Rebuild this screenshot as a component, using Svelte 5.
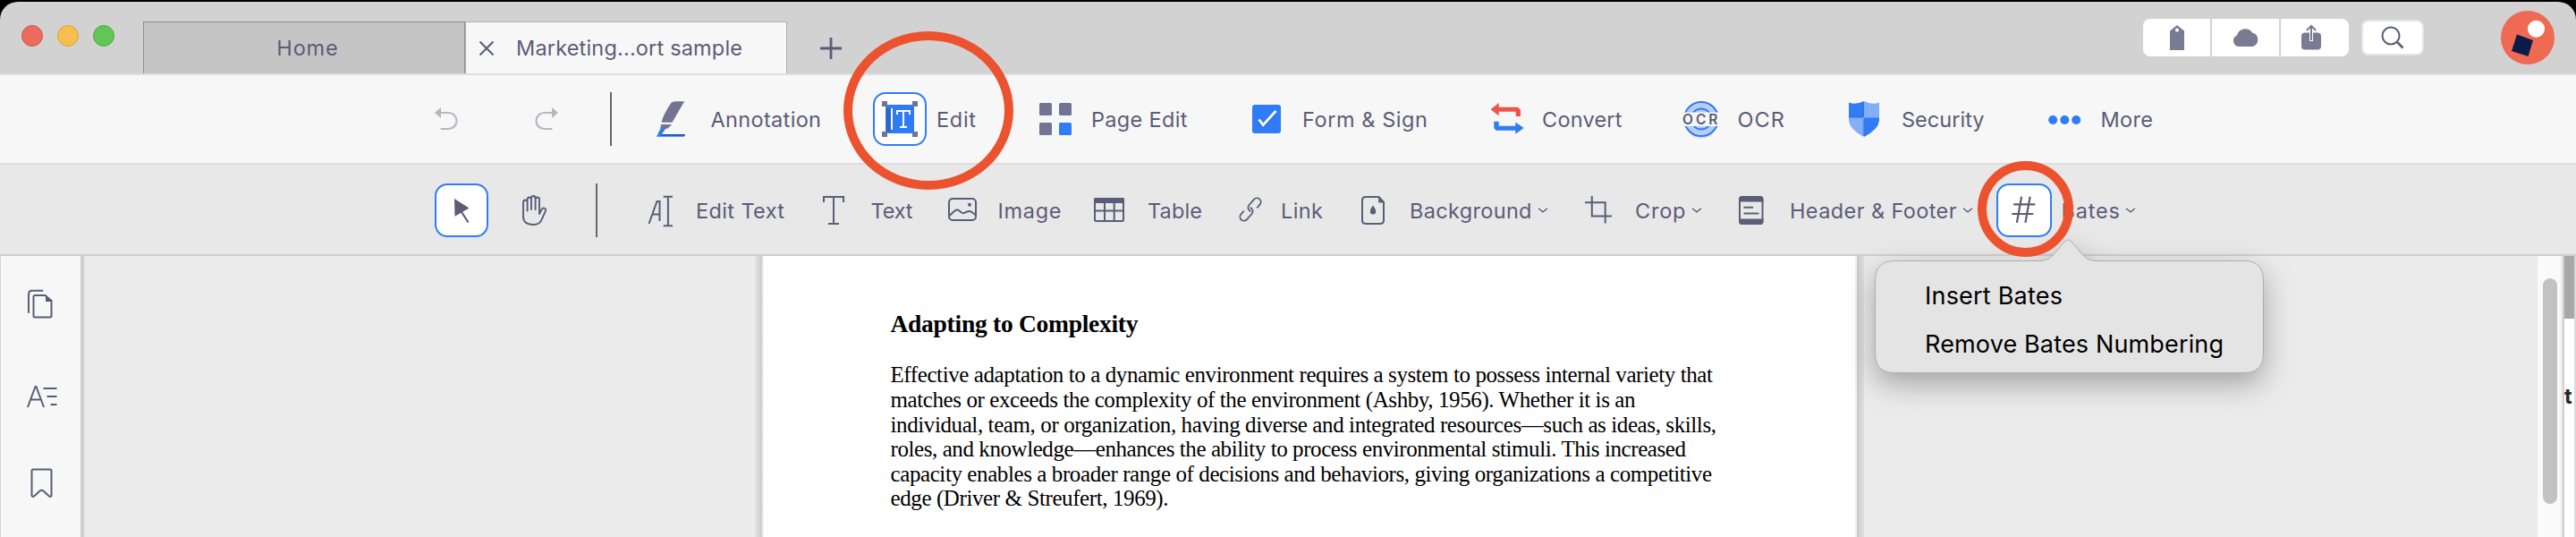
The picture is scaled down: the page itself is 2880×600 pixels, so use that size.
<script>
	const ink = '#5b5c78';
	const blue = '#2f7cf6';
	const slate = '#737492';

	// at: left edge of the icon slot, x / end: label start and end
	const modes = [
		{ icon: 'annotation', label: 'Annotation', at: 720, x: 794.5, end: 918 },
		{ icon: 'edit', label: 'Edit', at: 976, x: 1047, end: 1091, active: true },
		{ icon: 'pages', label: 'Page Edit', at: 1150, x: 1220, end: 1327.5 },
		{ icon: 'form', label: 'Form & Sign', at: 1386, x: 1456, end: 1596 },
		{ icon: 'convert', label: 'Convert', at: 1655, x: 1724, end: 1813.5 },
		{ icon: 'ocr', label: 'OCR', at: 1872, x: 1942.5, end: 1995 },
		{ icon: 'security', label: 'Security', at: 2054, x: 2126, end: 2218.5 },
		{ icon: 'more', label: 'More', at: 2278, x: 2348.5, end: 2407 }
	];

	const tools = [
		{ icon: 'edittext', label: 'Edit Text', at: 708, x: 778, end: 877 },
		{ icon: 'text', label: 'Text', at: 902, x: 973.5, end: 1020.5 },
		{ icon: 'image', label: 'Image', at: 1046, x: 1115.5, end: 1186.5 },
		{ icon: 'table', label: 'Table', at: 1210, x: 1283, end: 1344 },
		{ icon: 'link', label: 'Link', at: 1368, x: 1432, end: 1479 },
		{ icon: 'background', label: 'Background', at: 1505, x: 1576, end: 1712.5, menu: true },
		{ icon: 'crop', label: 'Crop', at: 1757, x: 1828, end: 1884.5, menu: true },
		{ icon: 'header', label: 'Header & Footer', at: 1928, x: 2001, end: 2187.5, menu: true },
		{ icon: 'bates', label: 'Bates', at: 2232, x: 2304.5, end: 2370, menu: true, active: true }
	];

	const lines = [
		['Effective adaptation to a dynamic environment requires a system to possess internal variety that', 919.5],
		['matches or exceeds the complexity of the environment (Ashby, 1956). Whether it is an', 833],
		['individual, team, or organization, having diverse and integrated resources—such as ideas, skills,', 923.5],
		['roles, and knowledge—enhances the ability to process environmental stimuli. This increased', 889.5],
		['capacity enables a broader range of decisions and behaviors, giving organizations a competitive', 918.5],
		['edge (Driver & Streufert, 1969).', 311]
	];

	// Tracks a label out (or in) so that it fills the given width
	function fit(node, width) {
		const natural = node.getBoundingClientRect().width;
		const gaps = node.textContent.length - 1;
		node.style.letterSpacing = `${(width - natural) / gaps}px`;
	}
</script>

{#snippet toolIcon(name)}
	<svg width="60" height="60" viewBox="0 0 60 60" fill="none" stroke={ink} stroke-width="2">
		{#if name === 'annotation'}
			<g stroke="none">
				<path d="M30 12.5Q32 10.2 35 10.2H45.2L31.5 33.8H19.5Q22 24 30 12.5z" fill={slate} />
				<path d="M19 36H31.2L27 40Q26 41 24.500 41H18.200z" fill={slate} />
				<path d="M18.200 41H24L20 47H46L45 49.800H14z" fill={blue} />
				<path d="M20 47H46L45.500 48.500H19z" fill="#1d4fa8" />
			</g>
		{:else if name === 'edit'}
			<g stroke="none">
				<rect x="14" y="14" width="32" height="32" fill={blue} />
				<rect x="15" y="18" width="6" height="26" fill="#2767cf" />
				<rect x="20" y="18" width="2" height="24" fill="#fff" />
				{#each [[10, 10], [44, 10], [10, 44], [44, 44]] as [x, y]}
					<rect {x} {y} width="6" height="6" fill={slate} />
				{/each}
			</g>
			<g stroke="#fff">
				<polyline points="27,25 27,21 41,21 41,25" />
				<line x1="34" y1="21" x2="34" y2="39" />
				<line x1="30" y1="39" x2="38" y2="39" />
			</g>
		{:else if name === 'pages'}
			<g stroke="none" fill={slate}>
				<rect x="12" y="12" width="14" height="14" rx="1.500" />
				<rect x="34" y="12" width="14" height="14" rx="1.500" />
				<rect x="12" y="34" width="14" height="14" rx="1.500" />
				<rect x="34" y="34" width="14" height="14" rx="1.500" fill={blue} />
			</g>
		{:else if name === 'form'}
			<rect x="14" y="14" width="32" height="32" rx="3" fill={blue} stroke="none" />
			<path d="M22 32L26.500 38L40.500 22" stroke="#2767cf" stroke-width="3" />
			<path d="M21.500 30.500L26.200 36.800L40.500 21" stroke="#fff" stroke-width="2.800" />
		{:else if name === 'convert'}
			<g stroke="none">
				<path d="M11.500 19.300L20.700 12v4.700H42L45 20v7h-5.300v-5.300h-19v4.600z" fill="#f0524c" />
				<path d="M15.300 32.700h5.400v5h18.600v-4.200l9.400 6.500l-9.400 6.700v-4H17.500L15.300 40z" fill={blue} />
			</g>
		{:else if name === 'ocr'}
			<ellipse cx="30" cy="33" rx="18" ry="19" fill="#dddee2" stroke="none" />
			<circle cx="30" cy="30" r="19" fill="#b9cdf2" stroke={blue} />
			<circle cx="30" cy="30" r="11.500" stroke={blue} />
			<rect x="9" y="22.500" width="42" height="15.500" fill="#f7f7f7" stroke="none" />
			<text class="ocr-mark" x="9" y="36">OCR</text>
		{:else if name === 'security'}
			<g stroke="none">
				<path d="M13 11.500Q21 14.500 30 10V28.300H13z" fill={blue} />
				<path d="M30 10Q39 14.500 47 11.500V28.300H30z" fill="#82aefa" />
				<path d="M13 28.300H30V50Q14 41.500 13 32z" fill="#82aefa" />
				<path d="M30 28.300H47V32Q46 41.500 30 50z" fill={blue} />
				<path d="M13 27.300H30V28.900H13zM28.800 11V49H30V11z" fill="#3567bd" opacity=".5" />
			</g>
		{:else if name === 'more'}
			<g stroke="none" fill={blue}>
				<circle cx="17.200" cy="31" r="5" />
				<circle cx="30.300" cy="31" r="5" />
				<circle cx="43.200" cy="31" r="5" />
			</g>
		{:else if name === 'edittext'}
			<polyline points="17.500,45 26.500,20 29.500,20 29.500,42" />
			<line x1="21" y1="34.500" x2="29.500" y2="34.500" />
			<path d="M33.700 14.800H44M38.900 14.800V47.200M33.700 47.200H44" />
		{:else if name === 'text'}
			<polyline points="19,21 19,15 41,15 41,21" />
			<line x1="30" y1="15" x2="30" y2="45" />
			<line x1="24" y1="45" x2="36" y2="45" />
		{:else if name === 'image'}
			<rect x="15" y="17" width="30" height="24" rx="4" />
			<path d="M15.500 36L21.500 30.500Q24 28.500 26.500 30.500L29 32.500Q31 33.800 33 32.500L36 31.200Q38.500 30.500 40.500 32L44.500 35" />
			<circle cx="38" cy="23.700" r="2" fill={ink} stroke="none" />
		{:else if name === 'table'}
			<rect x="14" y="17" width="32" height="25" rx="1.500" />
			<rect x="13" y="16" width="34" height="6" rx="1.500" fill={ink} stroke="none" />
			<path d="M25 20V42M35.700 20V42M14 30.500H46" />
		{:else if name === 'link'}
			<g transform="translate(30 29) rotate(-49)" stroke-width="1.800">
				<path d="M6 4.400H11a4.400 4.400 0 0 0 0-8.800H2.500a4.400 4.400 0 0 0-3.800 6.200" />
				<path d="M-6-4.400H-11a4.400 4.400 0 0 0 0 8.800H-2.500a4.400 4.400 0 0 0 3.800-6.200" />
			</g>
		{:else if name === 'background'}
			<path d="M36.500 15H22q-4 0-4 4V41q0 4 4 4H38q4 0 4-4V21z" />
			<path d="M36.200 14.500V21.500H43z" fill={ink} stroke="none" />
			<path d="M30 24.500q3.200 4.200 3.200 6.700a3.200 3.200 0 0 1-6.400 0q0-2.500 3.200-6.700z" fill={ink} stroke="none" />
		{:else if name === 'crop'}
			<path d="M22.800 14V36.500H45M15 21.300H37.700V44.500" />
		{:else if name === 'header'}
			<rect x="17" y="15" width="25.500" height="30" rx="3" />
			<path d="M16 20.500V18q0-4 4-4H39.500q4 0 4 4V20.500zM16 39.500V42q0 4 4 4H39.500q4 0 4-4V39.500z" fill={ink} stroke="none" />
			<path d="M21.500 26.700H32M21.500 33.500H38.500" />
		{:else if name === 'bates'}
			<g stroke-width="2.200" stroke-linecap="round">
				<line x1="28" y1="15.500" x2="23" y2="43" />
				<line x1="37.500" y1="15.500" x2="32.500" y2="43" />
				<line x1="20" y1="23.300" x2="42.500" y2="23.300" />
				<line x1="18" y1="34" x2="40.500" y2="34" />
			</g>
		{/if}
	</svg>
{/snippet}

{#snippet toolItem(tool, next)}
	<div class="tool" style:width="{next - tool.at}px">
		<div class="slot" class:active={tool.active} class:wide={tool.icon === 'bates'}>
			{@render toolIcon(tool.icon)}
		</div>
		<span class="label" style:margin-left="{tool.x - tool.at - (tool.icon === 'bates' ? 62 : 60)}px" style:width="{tool.end - tool.x}px">
			<span use:fit={tool.end - tool.x}>{tool.label}</span>
		</span>
		{#if tool.menu}
			<svg class="chevron" width="12" height="6" viewBox="0 0 12 6" fill="none" stroke={ink} stroke-width="1.300">
				<path d="M1 .8L6 4.800L11 .8" />
			</svg>
		{/if}
	</div>
{/snippet}

<div class="window">
	<header class="titlebar">
		<div class="lights">
			<i class="light close"></i>
			<i class="light minimise"></i>
			<i class="light zoom"></i>
		</div>
		<div class="tab home"><span use:fit={68.5}>Home</span></div>
		<div class="tab current">
			<svg width="18" height="18" viewBox="0 0 18 18" stroke={ink} stroke-width="2"><path d="M1.500 1.500L16.500 16.500M16.500 1.500L1.500 16.500" /></svg>
			<span use:fit={253}>Marketing...ort sample</span>
		</div>
		<svg class="plus" width="24" height="24" viewBox="0 0 24 24" stroke={ink} stroke-width="2.800"><path d="M12 0V24M0 12H24" /></svg>
		<div class="actions">
			<div class="action">
				<svg width="20" height="30" viewBox="0 0 20 30"><path fill="#797b92" fill-rule="evenodd" d="M2 29V7.500L10 1L18 7.500V29zM10 4.500a2 2 0 1 0 0 4.200a2 2 0 1 0 0-4.200z" /></svg>
			</div>
			<div class="action">
				<svg width="30" height="22" viewBox="0 0 30 22"><path fill="#797b92" d="M7 21a6.500 6.500 0 0 1-2-12.500A9.500 9.500 0 0 1 22 5.500A8 8 0 0 1 22.500 21z" /></svg>
			</div>
			<div class="action last">
				<svg width="24" height="30" viewBox="0 0 24 30">
					<rect x="1" y="9.500" width="22" height="19" rx="4" fill="#797b92" />
					<path d="M12 19V9" stroke="#fff" stroke-width="4" />
					<path d="M12 18V2M6.800 7L12 2L17.200 7" fill="none" stroke="#797b92" stroke-width="2" />
				</svg>
			</div>
		</div>
		<div class="search">
			<svg width="26" height="26" viewBox="0 0 26 26" fill="none" stroke={ink} stroke-width="2"><circle cx="11" cy="11" r="9.500" /><path d="M17.500 17.500L24.500 24.500" stroke-width="2.500" /></svg>
		</div>
		<svg class="avatar" width="60" height="60" viewBox="0 0 60 60">
			<circle cx="30" cy="30" r="30" fill="#ef6a53" />
			<circle cx="39.500" cy="20.300" r="9.500" fill="#fff" />
			<polygon points="18,26.500 36,33 30.500,51 12,45" fill="#0c1c48" />
		</svg>
	</header>

	<nav class="bar modes">
		<svg class="undo" width="26" height="26" viewBox="0 0 26 26" fill="none" stroke="#b7b6c3" stroke-width="2.200" stroke-linecap="round"><path d="M6 6H15.500a9 9 0 0 1 0 18H7.500" /><path d="M0 6L7 0V12z" fill="#b7b6c3" stroke="none" /></svg>
		<svg class="redo" width="26" height="26" viewBox="0 0 26 26" fill="none" stroke="#b7b6c3" stroke-width="2.200" stroke-linecap="round"><path d="M20 6H10.500a9 9 0 0 0 0 18H18.500" /><path d="M26 6L19 0V12z" fill="#b7b6c3" stroke="none" /></svg>
		<div class="divider"></div>
		{#each modes as mode, i}
			{@render toolItem(mode, modes[i + 1]?.at ?? 2880)}
		{/each}
	</nav>

	<nav class="bar tools">
		<div class="slot active pointer">
			<svg width="60" height="60" viewBox="0 0 60 60" fill={ink}>
				<path d="M20 15L36.500 25.500L20.500 34.800z" />
				<path d="M27.500 29L35.500 41.500" stroke={ink} stroke-width="2.200" />
			</svg>
		</div>
		<svg class="hand" width="60" height="60" viewBox="0 0 60 60" fill="none" stroke={ink} stroke-width="1.900" stroke-linecap="round" stroke-linejoin="round">
			<path d="M18 37V21q0-2.500 2.300-2.500t2.300 2.500v9.500M22.600 21v-3q0-2.500 2.200-2.500t2.200 2.500V29M27 17.500v-1q0-2.500 2.300-2.500t2.300 2.500V29M31.600 18q0-2.500 2.200-2.500t2.200 2.500V34l2.500-5q1.500-2.300 3.500-1.200t.6 3.500L39 39.500q-2.200 6.500-9.500 6.500Q18 46 18 37" />
		</svg>
		<div class="divider"></div>
		{#each tools as tool, i}
			{@render toolItem(tool, tools[i + 1]?.at ?? 2600)}
		{/each}
	</nav>

	<main>
		<aside class="sidebar">
			<svg width="34" height="34" viewBox="0 0 34 34" fill="none" stroke={ink} stroke-width="2" stroke-linecap="round">
				<path d="M2 26V6Q2 1.800 6 1.800H17.500" />
				<path d="M20.500 7H9Q7.500 7 7.500 8.500V30Q7.500 31.500 9 31.500H26Q27.500 31.500 27.500 30V13z" />
				<path d="M21 6.500V14H28.500z" fill={ink} stroke="none" />
			</svg>
			<svg class="styles" width="34" height="26" viewBox="0 0 34 26" fill="none" stroke={ink} stroke-width="2">
				<polyline points="1,25 9.500,2 10.500,2 19,25" />
				<path d="M5 16.500H15M18.500 4H33.500M22.500 13H33.500M26.500 22H33.500" />
			</svg>
			<svg class="bookmark" width="26" height="34" viewBox="0 0 26 34" fill="none" stroke={ink} stroke-width="2" stroke-linejoin="round">
				<path d="M3 1.500H22Q23.500 1.500 23.500 3V31Q22.500 32.500 21 31.500L14.500 25.500Q12.500 24 10.500 25.500L4 31.500Q2.500 32.500 1.500 31V3Q1.500 1.500 3 1.500z" />
			</svg>
		</aside>
		<section class="canvas">
			<div class="edge left"></div>
			<article>
				<h1><span use:fit={277}>Adapting to Complexity</span></h1>
				{#each lines as [text, width]}
					<p><span use:fit={width}>{text}</span></p>
				{/each}
			</article>
			<div class="edge right"></div>
		</section>
		<div class="track"><div class="thumb"></div></div>
		<div class="behind">
			<div class="behind-top"></div>
			<b>t</b>
		</div>
	</main>

	<div class="popover">
		<svg class="bubble" width="435" height="151" viewBox="0 0 435 151">
			<path d="M22 24.500H187Q193 24.500 199 18.500L212 3Q216-1 220 3L233 18.500Q239 24.500 245 24.500H413Q434.500 24.500 434.500 46V128Q434.500 149.500 413 149.500H22Q.5 149.500.5 128V46Q.5 24.500 22 24.500z" fill="#e4e4e4" stroke="#adadad" />
		</svg>
		<div class="choices">
			<div class="choice"><span use:fit={154}>Insert Bates</span></div>
			<div class="choice"><span use:fit={334}>Remove Bates Numbering</span></div>
		</div>
	</div>

	<div class="ring edit-ring"></div>
	<div class="ring bates-ring"></div>
</div>

<style>
	:global(body) {
		background: #000;
	}

	.window {
		position: relative;
		width: 2880px;
		height: 600px;
		box-sizing: border-box;
		padding-top: 2px;
		overflow: hidden;
		font-family: Inter, 'Liberation Sans', sans-serif;
		font-size: 23.5px;
		color: #5b5c78;
		white-space: nowrap;
	}

	svg {
		display: block;
		flex: none;
		overflow: visible;
	}

	.titlebar {
		display: flex;
		height: 80px;
		background: #d2d2d2;
		border-bottom: 2px solid #dedede;
		border-radius: 20px 20px 0 0;
	}

	.lights {
		display: flex;
		gap: 16px;
		width: 136px;
		padding: 26px 0 0 24px;
	}

	.light {
		box-sizing: border-box;
		width: 24px;
		height: 24px;
		border-radius: 50%;
	}

	.close {
		background: #ed6a5f;
		border: 1px solid #d5534a;
	}

	.minimise {
		background: #f5bf4f;
		border: 1px solid #daa23b;
	}

	.zoom {
		background: #62c656;
		border: 1px solid #4eab41;
	}

	.tab {
		display: flex;
		align-items: center;
		box-sizing: border-box;
		width: 360px;
		height: 58px;
		margin-top: 22px;
	}

	.home {
		justify-content: center;
		padding-left: 8px;
		background: #c5c5c5;
		border: 1px solid #929292;
		border-bottom: 0;
	}

	.current {
		gap: 24px;
		padding-left: 14px;
		background: #f7f7f7;
		border: 1px solid #b0b0b0;
		border-bottom: 0;
	}

	.plus {
		margin: 40px 0 0 37px;
	}

	.actions {
		display: flex;
		gap: 2px;
		height: 42px;
		margin: 19px 0 0 1455px;
		border-radius: 8px;
		overflow: hidden;
	}

	.action {
		display: flex;
		align-items: center;
		justify-content: center;
		width: 75px;
		background: #fff;
	}

	.action.last {
		width: 68px;
		padding-right: 8px;
	}

	.search {
		display: flex;
		align-items: center;
		justify-content: center;
		box-sizing: border-box;
		width: 70px;
		height: 40px;
		margin: 20px 0 0 14px;
		background: #fff;
		border: 2px solid #e5e5e5;
		border-radius: 8px;
	}

	.avatar {
		margin: 10px 0 0 86px;
	}

	.bar {
		display: flex;
		align-items: center;
		box-sizing: border-box;
	}

	.modes {
		height: 100px;
		background: #f7f7f7;
		border-bottom: 2px solid #dedede;
	}

	.tools {
		height: 102px;
		padding-top: 2px;
		background: #e8e8e8;
		border-bottom: 2px solid #cfcfcf;
	}

	.undo {
		margin-left: 486px;
	}

	.redo {
		margin-left: 86px;
	}

	.divider {
		width: 2px;
		height: 60px;
		background: #666;
	}

	.modes .divider {
		margin: 0 36px 0 58px;
	}

	.tools .divider {
		margin: 0 40px 0 39px;
	}

	.pointer {
		margin-left: 486px;
	}

	.hand {
		margin-left: 21px;
	}

	.tool {
		display: flex;
		align-items: center;
		flex: none;
	}

	.slot {
		flex: none;
		width: 60px;
		height: 60px;
		box-sizing: border-box;
	}

	.slot.active {
		background: #fff;
		border: 2px solid #2f7cf6;
		border-radius: 14px;
	}

	.slot.active svg {
		margin: -2px;
	}

	.slot.pointer svg {
		margin: 0;
	}

	.slot.wide {
		width: 62px;
	}

	.slot.wide svg {
		margin-left: -2px;
	}

	.label {
		flex: none;
	}

	.chevron {
		margin-left: 6px;
	}

	.ocr-mark {
		fill: #5b5c78;
		stroke: none;
		font-size: 15.5px;
		font-weight: 600;
		letter-spacing: 3px;
	}

	main {
		display: flex;
		height: 314px;
	}

	.sidebar {
		box-sizing: border-box;
		width: 94px;
		padding: 37px 0 0 29px;
		background: #f7f7f7;
		border-left: 1px solid #d6d6d6;
		border-right: 4px solid #cfcfcf;
	}

	.styles {
		margin: 73px 0 0;
	}

	.bookmark {
		margin: 67px 0 0 4px;
	}

	.canvas {
		display: flex;
		width: 2743px;
		background: #ebebeb;
	}

	.edge {
		flex: none;
		width: 8px;
	}

	.edge.left {
		margin-left: 750px;
		background: linear-gradient(to right, #e3e3e3, #cccccc);
	}

	.edge.right {
		background: linear-gradient(to left, #e0e0e0, #cacaca);
	}

	article {
		box-sizing: border-box;
		width: 1224px;
		padding: 61px 0 0 141.5px;
		background: #fff;
		border: solid #f1f1f1;
		border-width: 0 2px;
		font-family: 'Liberation Serif', serif;
		font-size: 25px;
		color: #000;
	}

	h1 {
		margin: 0 0 28.4px;
		font-size: 27.5px;
		line-height: 30px;
	}

	p {
		margin: 0;
		line-height: 27.6px;
	}

	.track {
		flex: none;
		box-sizing: border-box;
		width: 28px;
		padding: 25px 0 0 6px;
		background: #fafafa;
		border-right: 2px solid #ebebeb;
	}

	.thumb {
		width: 16px;
		height: 252px;
		border-radius: 8px;
		background: #c2c2c2;
	}

	.behind {
		flex: none;
		box-sizing: border-box;
		width: 15px;
		background: #fff;
		border-left: 2px solid #cfcfcf;
		border-right: 2px solid #d9d9d9;
		color: #272727;
		overflow: hidden;
	}

	.behind-top {
		height: 70px;
		margin-bottom: 72px;
		background: #a8a8a8;
	}

	.popover {
		position: absolute;
		left: 2096px;
		top: 267px;
		width: 435px;
		height: 151px;
		font-size: 27px;
		color: #000;
	}

	.bubble {
		position: absolute;
		inset: 0;
		filter: drop-shadow(0 12px 16px rgba(0, 0, 0, 0.3));
	}

	.choices {
		position: relative;
		padding: 37px 0 0 56px;
	}

	.choice {
		height: 54px;
		line-height: 54px;
	}

	.ring {
		position: absolute;
		box-sizing: border-box;
		border: 10px solid #ec522e;
		border-radius: 50%;
	}

	.edit-ring {
		left: 943px;
		top: 35px;
		width: 190px;
		height: 177px;
	}

	.bates-ring {
		left: 2211px;
		top: 180px;
		width: 107px;
		height: 107px;
	}
</style>
